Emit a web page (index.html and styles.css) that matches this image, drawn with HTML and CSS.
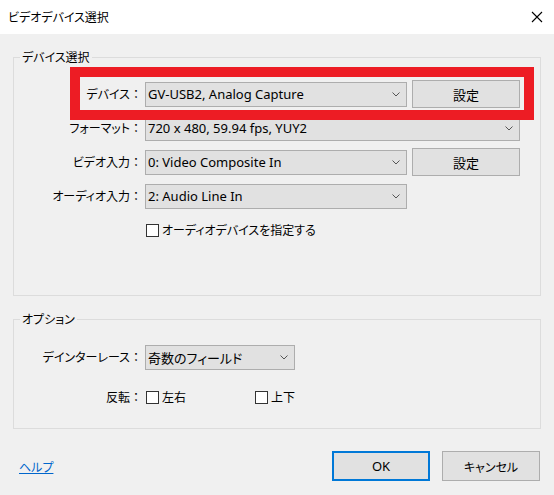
FILE: index.html
```html
<!DOCTYPE html>
<html lang="ja">
<head>
<meta charset="utf-8">
<title>ビデオデバイス選択</title>
<link rel="stylesheet" href="styles.css">
</head>
<body>
<div class="window">
  <div class="titlebar">
    <span class="title">ビデオデバイス選択</span>
    <span class="close"><svg width="12" height="12" viewBox="0 0 12 12"><path d="M1 1 L11 11 M11 1 L1 11" stroke="#000" stroke-width="1.1" fill="none"/></svg></span>
  </div>
  <div class="content">
    <fieldset class="group g1">
      <legend>デバイス選択</legend>
      <div class="form">
        <span class="lbl">デバイス<span class="colon">：</span></span>
        <div class="combo"><span class="val latin">GV-USB2, Analog Capture</span><svg class="chev" width="8" height="5" viewBox="0 0 8 5"><path d="M0.5 0.5 L4 4 L7.5 0.5" stroke="#555" fill="none"/></svg></div>
        <button class="btn">設定</button>

        <span class="lbl">フォーマット<span class="colon">：</span></span>
        <div class="combo wide"><span class="val latin">720 x 480, 59.94 fps, YUY2</span><svg class="chev" width="8" height="5" viewBox="0 0 8 5"><path d="M0.5 0.5 L4 4 L7.5 0.5" stroke="#555" fill="none"/></svg></div>

        <span class="lbl">ビデオ入力<span class="colon">：</span></span>
        <div class="combo"><span class="val latin">0: Video Composite In</span><svg class="chev" width="8" height="5" viewBox="0 0 8 5"><path d="M0.5 0.5 L4 4 L7.5 0.5" stroke="#555" fill="none"/></svg></div>
        <button class="btn">設定</button>

        <span class="lbl">オーディオ入力<span class="colon">：</span></span>
        <div class="combo"><span class="val latin">2: Audio Line In</span><svg class="chev" width="8" height="5" viewBox="0 0 8 5"><path d="M0.5 0.5 L4 4 L7.5 0.5" stroke="#555" fill="none"/></svg></div>
      </div>
      <label class="check audio"><span class="box"></span>オーディオデバイスを指定する</label>
    </fieldset>

    <fieldset class="group g2">
      <legend>オプション</legend>
      <div class="form2">
        <span class="lbl">デインターレース<span class="colon">：</span></span>
        <div class="combo short"><span class="val">奇数のフィールド</span><svg class="chev" width="8" height="5" viewBox="0 0 8 5"><path d="M0.5 0.5 L4 4 L7.5 0.5" stroke="#555" fill="none"/></svg></div>

        <span class="lbl">反転<span class="colon">：</span></span>
        <div class="checks">
          <label class="check first"><span class="box"></span>左右</label>
          <label class="check"><span class="box"></span>上下</label>
        </div>
      </div>
    </fieldset>

    <div class="footer">
      <a class="help" href="#">ヘルプ</a>
      <div class="actions">
        <button class="btn big default"><span class="latin">OK</span></button>
        <button class="btn big">キャンセル</button>
      </div>
    </div>
  </div>
  <div class="highlight"></div>
</div>
</body>
</html>
```
FILE: styles.css
```css
html, body {
  margin: 0;
  padding: 0;
}
body {
  width: 554px;
  height: 495px;
  background: #f0f0f0;
  font-family: "Noto Sans CJK JP", "Noto Sans", sans-serif;
  font-size: 12px;
  color: #000;
  overflow: hidden;
}
.window {
  position: relative;
  width: 554px;
  height: 495px;
}
.titlebar {
  height: 34px;
  background: #fff;
  display: flex;
  align-items: center;
  justify-content: space-between;
  padding: 0 11px 0 8px;
  box-sizing: border-box;
}
.title {
  font-size: 12px;
  font-feature-settings: "palt";
  line-height: 16px;
}
.close {
  display: flex;
  width: 12px;
  height: 12px;
}
.content {
  padding: 0 13px;
}
.group {
  margin: 0;
  border: 1px solid #dcdcdc;
  padding: 0;
  min-width: 0;
}
.group legend {
  margin-left: 6px;
  padding: 0 2px;
  line-height: 16px;
  font-feature-settings: "palt";
}
.g1 {
  margin-top: 15px;
  padding: 15px 0 57px 0;
}
.form {
  display: grid;
  grid-template-columns: 126px 262px 108px;
  column-gap: 5px;
  row-gap: 6px;
  grid-auto-rows: 28px;
  align-items: center;
}
.lbl {
  text-align: right;
  font-feature-settings: "palt";
  line-height: 16px;
  white-space: nowrap;
  margin-right: -2px;
}
.colon {
  font-feature-settings: normal;
}
.combo {
  height: 25px;
  box-sizing: border-box;
  background: #e1e1e1;
  border: 1px solid #adadad;
  display: flex;
  align-items: center;
  justify-content: space-between;
  padding: 0 6px 0 2px;
}
.combo.wide {
  grid-column: 2 / 4;
}
.combo.short {
  width: 150px;
}
.val {
  white-space: nowrap;
  font-feature-settings: "palt";
  font-size: 13px;
}
.latin {
  font-family: "Noto Sans", "Noto Sans CJK JP", sans-serif;
  font-size: 13px;
}
.chev {
  display: block;
}
.btn {
  height: 28px;
  box-sizing: border-box;
  background: #e1e1e1;
  border: 1px solid #adadad;
  font-family: "Noto Sans CJK JP", sans-serif;
  font-size: 13px;
  color: #000;
  padding: 0;
  margin: 0;
}
.check {
  display: flex;
  align-items: center;
  gap: 3px;
  line-height: 16px;
  font-feature-settings: "palt";
  white-space: nowrap;
}
.box {
  width: 13px;
  height: 13px;
  box-sizing: border-box;
  border: 1px solid #333;
  background: #fff;
  flex: none;
}
.check.audio {
  margin: 12px 0 0 132px;
}
.g2 {
  margin-top: 15px;
  padding: 16px 0 17px 0;
}
.form2 {
  display: grid;
  grid-template-columns: 126px auto;
  column-gap: 5px;
  row-gap: 12px;
  grid-auto-rows: 28px;
  align-items: center;
}
.checks {
  display: flex;
  align-items: center;
  padding-left: 1px;
}
.check.first {
  width: 109px;
}
.footer {
  margin-top: 22px;
  display: flex;
  align-items: center;
  justify-content: space-between;
  padding-left: 6px;
  padding-right: 1px;
}
.help {
  color: #0066cc;
  text-decoration: underline;
  font-feature-settings: "palt";
}
.actions {
  display: flex;
  gap: 12px;
}
.btn.big {
  width: 98px;
  height: 30px;
  font-size: 12px;
  font-feature-settings: "palt";
}
.btn.default {
  border: 2px solid #0078d7;
}
.btn.default .latin {
  font-size: 13px;
}
.highlight {
  position: absolute;
  left: 70px;
  top: 67px;
  width: 464px;
  height: 53px;
  box-sizing: border-box;
  border: 10px solid #ed1c24;
  pointer-events: none;
}
```
